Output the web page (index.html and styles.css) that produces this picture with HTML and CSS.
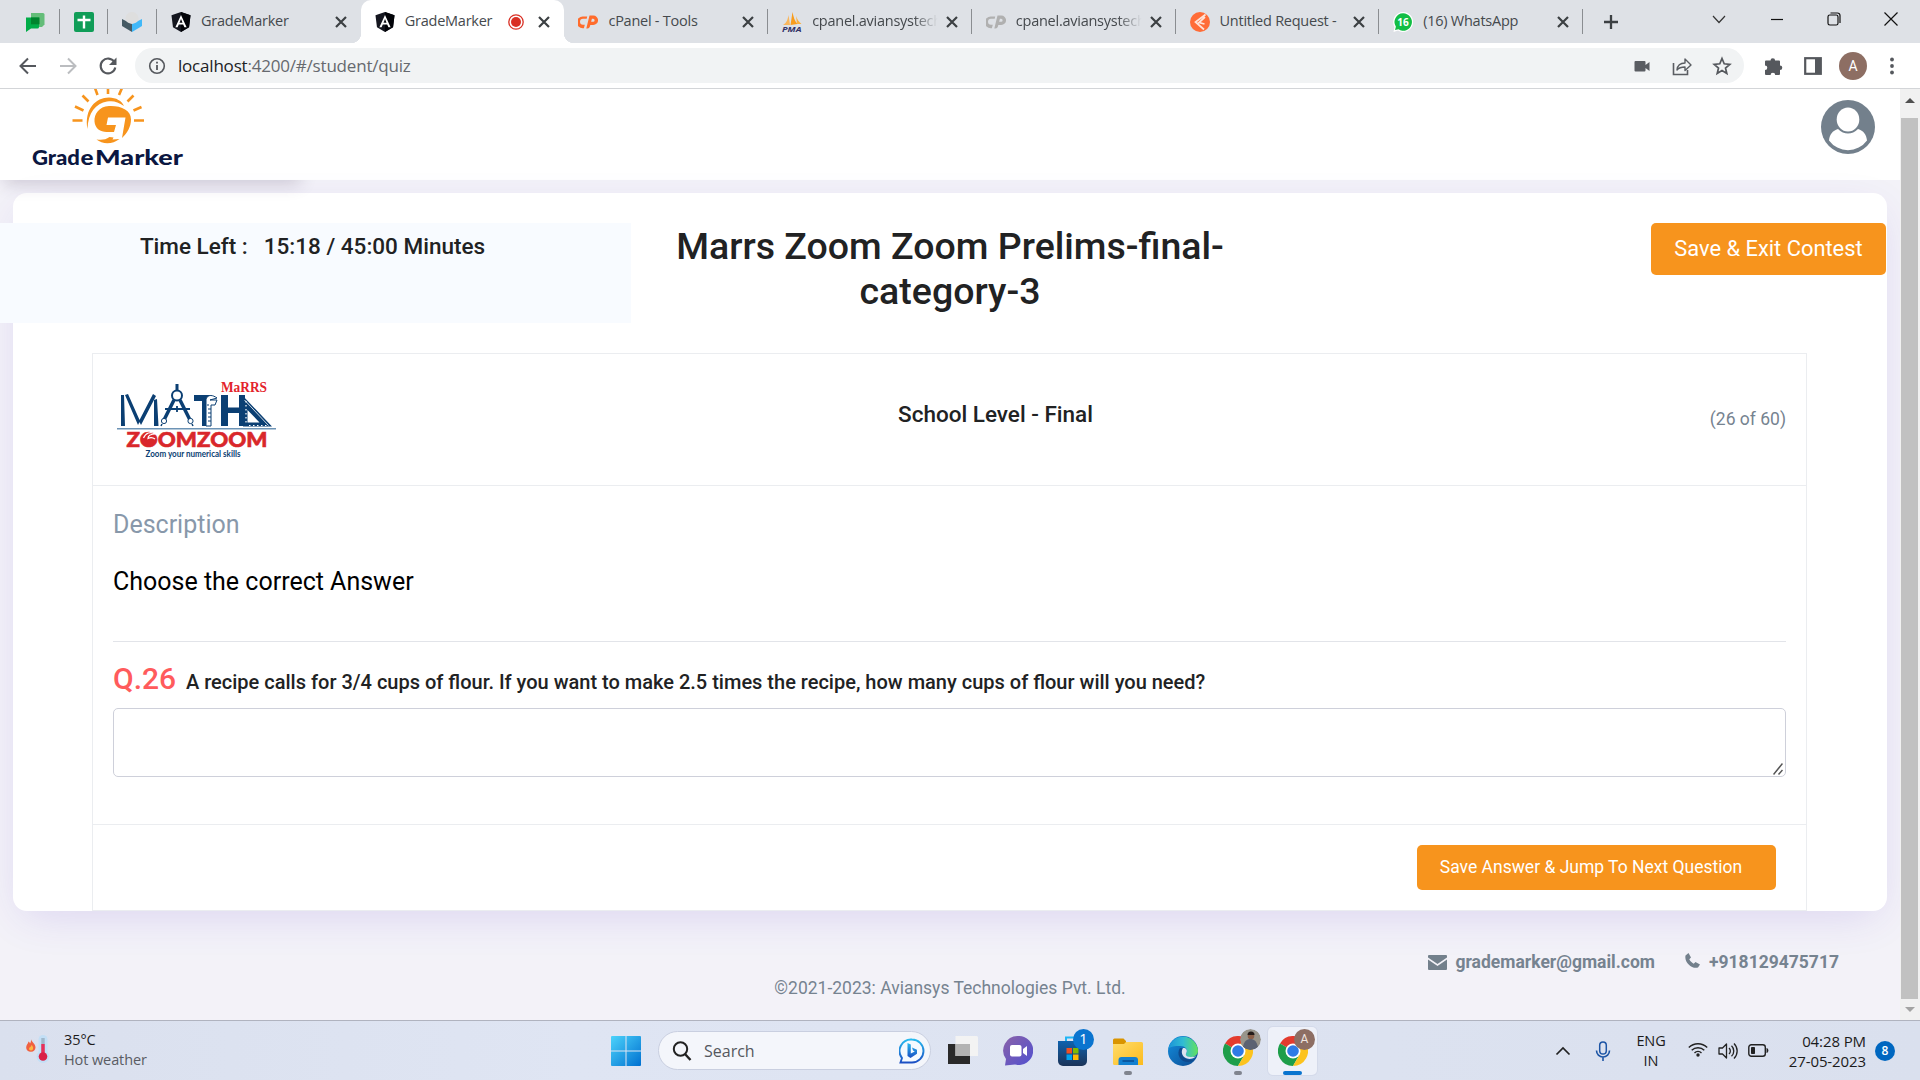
FILE: index.html
```html
<!DOCTYPE html>
<html lang="en">
<head>
<meta charset="utf-8">
<title>GradeMarker</title>
<link rel="stylesheet" href="styles.css">
</head>
<body>
<svg class="defs" width="0" height="0">
  <defs>
    <symbol id="x" viewBox="0 0 14 14"><path d="M2 2l10 10M12 2L2 12" stroke="#3c4043" stroke-width="2.2" fill="none"/></symbol>
    <symbol id="angular" viewBox="0 0 20 20"><path d="M10 0l9.500 3.300-1.500 12L10 20l-8-4.700L.5 3.300z" fill="#14161f"/><path d="M10 0l9.500 3.300-1.500 12L10 20z" fill="#020308"/><path d="M10 3l5.600 12.300h-2.200l-1.200-2.900H7.800l-1.200 2.900H4.400zM10 7l-1.500 3.700h3z" fill="#fff"/></symbol>
    <symbol id="cp" viewBox="0 0 20 14"><path d="M8.700 3.700H5a3 3 0 0 0 0 6h1.800l-.9 3.600H4.700A4.900 4.900 0 0 1 4.700 1.500h4.500z" fill="currentColor"/><path d="M8.300 13.500L11.500.5h3.800a4.700 4.700 0 0 1 0 9.500h-3.200l.9-3.300h2.100a1.500 1.500 0 0 0 0-3h-1.200l-2 7.800a2.600 2.600 0 0 1-2.500 2z" fill="currentColor"/></symbol>
    <symbol id="chrome" viewBox="0 0 30 30"><path d="M15 15L2 7.500A15 15 0 0 1 28 7.500z" fill="#e33b2e"/><path d="M2 7.500A15 15 0 0 0 15 30l6.500-11.200L15 15z" fill="#1e9e4a"/><path d="M28 7.500A15 15 0 0 1 15 30l6.500-11.200L17 7.500z" fill="#fcc31e"/><circle cx="15" cy="15" r="7.500" fill="#fff"/><circle cx="15" cy="15" r="5.800" fill="#2f7be6"/></symbol>
    <linearGradient id="win" x1="0" y1="0" x2="1" y2="1"><stop offset="0" stop-color="#4cd3fb"/><stop offset="1" stop-color="#0070d0"/></linearGradient>
    <linearGradient id="bing" x1="0" y1="0" x2="0" y2="1"><stop offset="0" stop-color="#27b9ee"/><stop offset="1" stop-color="#1b4fc4"/></linearGradient>
    <linearGradient id="chat" x1="0" y1="0" x2="1" y2="1"><stop offset="0" stop-color="#8b62a8"/><stop offset="1" stop-color="#5050d0"/></linearGradient>
    <linearGradient id="store" x1="0" y1="0" x2="0" y2="1"><stop offset="0" stop-color="#0f62ae"/><stop offset="1" stop-color="#1b3358"/></linearGradient>
    <linearGradient id="folder" x1="0" y1="0" x2="1" y2="1"><stop offset="0" stop-color="#ffdc6a"/><stop offset="1" stop-color="#fcbb1d"/></linearGradient>
    <linearGradient id="edgeTop" x1="0" y1="0" x2="1" y2="0"><stop offset="0" stop-color="#1b93d8"/><stop offset=".5" stop-color="#31bcd3"/><stop offset="1" stop-color="#62e25c"/></linearGradient>
    <linearGradient id="edgeLow" x1="0" y1="0" x2="1" y2="1"><stop offset="0" stop-color="#1490df"/><stop offset="1" stop-color="#0c4a92"/></linearGradient>
  </defs>
</svg>

<div class="tabstrip">
  <div class="pin"><svg width="20" height="20" viewBox="0 0 20 20"><path d="M6 1h12a1.500 1.500 0 0 1 1.500 1.500v10L17 15H6z" fill="#64bd79"/><path d="M1 5.500h13V15a1.500 1.500 0 0 1-1.500 1.500H6L1 20z" fill="#00ac47"/><path d="M6 5.500h8.500v6.800H6z" fill="#00832d"/></svg></div>
  <div class="pin"><svg width="20" height="20" viewBox="0 0 20 20"><rect width="20" height="20" rx="2" fill="#109d58"/><path d="M10 3.500v13M3.500 8h13" stroke="#fff" stroke-width="2.400"/></svg></div>
  <div class="pin"><svg width="20" height="20" viewBox="0 0 20 20"><path d="M0 7l10 5v8L0 14z" fill="#455a64"/><path d="M20 7l-10 5v8l10-6z" fill="#40b8f8"/><path d="M10 0c4 0 6.500 3.500 6.500 6.500S13.500 11.500 10 11.500 3.500 9.500 3.500 6.500 6 0 10 0z" fill="#dedede"/></svg></div>
  <div class="tab"><svg class="fav" width="20" height="20"><use href="#angular"/></svg><span class="name">GradeMarker</span><svg class="close" width="14" height="14"><use href="#x"/></svg></div>
  <div class="tab active"><svg class="fav" width="20" height="20"><use href="#angular"/></svg><span class="name">GradeMarker</span><svg class="rec" width="16" height="16" viewBox="0 0 16 16"><circle cx="8" cy="8" r="7.200" fill="none" stroke="#d93025" stroke-width="1.300"/><circle cx="8" cy="8" r="5" fill="#d93025"/></svg><svg class="close" width="14" height="14"><use href="#x"/></svg></div>
  <div class="tab"><svg class="fav orange" width="20" height="14"><use href="#cp"/></svg><span class="name">cPanel - Tools</span><svg class="close" width="14" height="14"><use href="#x"/></svg></div>
  <div class="tab"><svg class="fav" width="20" height="20" viewBox="0 0 20 20"><path d="M1 13c4-2 5-7 5.500-10L8 13z" fill="#f9b65c"/><path d="M8.500 13L10.500 0c1 5 2 9 5 12z" fill="#f89c1c"/><path d="M15 12l-1-8c1 3 3 6 5.500 8z" fill="#fbb040"/><text x="0" y="19.500" font-size="7.500" font-weight="700" font-style="italic" textLength="19.500" lengthAdjust="spacingAndGlyphs" fill="#333366">PMA</text></svg><span class="name fade">cpanel.aviansystech</span><svg class="close" width="14" height="14"><use href="#x"/></svg></div>
  <div class="tab"><svg class="fav grey" width="20" height="14"><use href="#cp"/></svg><span class="name fade">cpanel.aviansystech</span><svg class="close" width="14" height="14"><use href="#x"/></svg></div>
  <div class="tab"><svg class="fav" width="20" height="20" viewBox="0 0 20 20"><circle cx="10" cy="10" r="10" fill="#ff6c37"/><path d="M15.500 2.500L5.500 10l8.500 7.500M15 5l-6 5.500 5.500 1.500" stroke="#ffe3d8" stroke-width="1.700" fill="none"/></svg><span class="name">Untitled Request -</span><svg class="close" width="14" height="14"><use href="#x"/></svg></div>
  <div class="tab"><svg class="fav" width="20" height="20" viewBox="0 0 20 20"><path d="M10 0a10 10 0 1 1-5 18.600L.5 20 1.500 15A10 10 0 0 1 10 0z" fill="#fff"/><path d="M10 1.300a8.700 8.700 0 1 1-4.500 16L2 18l.9-3.300A8.700 8.700 0 0 1 10 1.300z" fill="#12be45"/><text x="10" y="13.700" font-size="10" font-weight="700" text-anchor="middle" fill="#fff">16</text></svg><span class="name">(16) WhatsApp</span><svg class="close" width="14" height="14"><use href="#x"/></svg></div>
  <svg class="plus" width="16" height="16" viewBox="0 0 16 16"><path d="M8 1v14M1 8h14" stroke="#3c4043" stroke-width="2.300"/></svg>
  <div class="winctl">
    <svg width="16" height="14" viewBox="0 0 16 14"><path d="M2 4l6 6.500L14 4" stroke="#333" stroke-width="1.200" fill="none"/></svg>
    <svg width="14" height="14" viewBox="0 0 14 14"><path d="M1 7.500h12" stroke="#111" stroke-width="1.200"/></svg>
    <svg width="14" height="14" viewBox="0 0 14 14"><rect x="1" y="3" width="10" height="10" rx="1.800" fill="none" stroke="#111" stroke-width="1.200"/><path d="M3.500 1h7A2.500 2.500 0 0 1 13 3.500V11" fill="none" stroke="#111" stroke-width="1.200"/></svg>
    <svg width="14" height="14" viewBox="0 0 14 14"><path d="M.5.500l13 13M13.500.5l-13 13" stroke="#111" stroke-width="1.200"/></svg>
  </div>
</div>

<div class="toolbar">
  <svg class="nav" width="20" height="20" viewBox="0 0 20 20"><path d="M18 10H3M10 2.500L2.500 10l7.500 7.500" stroke="#55585d" stroke-width="2" fill="none"/></svg>
  <svg class="nav" width="20" height="20" viewBox="0 0 20 20"><path d="M2 10h15M10 2.500l7.500 7.500-7.500 7.500" stroke="#bbbdc0" stroke-width="2" fill="none"/></svg>
  <svg class="nav" width="20" height="20" viewBox="0 0 20 20"><path d="M16.300 6A7.400 7.400 0 1 0 17.300 11.500" stroke="#55585d" stroke-width="2.100" fill="none"/><path d="M18.500 1.500V9H11z" fill="#55585d"/></svg>
  <div class="omnibox">
    <svg width="18" height="18" viewBox="0 0 18 18"><circle cx="9" cy="9" r="7.300" stroke="#55585d" stroke-width="1.600" fill="none"/><path d="M9 8v5M9 4.700v1.900" stroke="#55585d" stroke-width="1.800"/></svg>
    <span class="url"><b>localhost</b>:4200/#/student/quiz</span>
    <div class="omni-actions">
      <svg width="20" height="20" viewBox="0 0 20 20"><path d="M3.500 5h9a1 1 0 0 1 1 1v3L17.500 6v9l-4-3v2.500a1 1 0 0 1-1 1h-9a1 1 0 0 1-1-1V6a1 1 0 0 1 1-1z" fill="#5a5d62"/></svg>
      <svg width="20" height="20" viewBox="0 0 20 20"><path d="M1.500 7v11.500h14V14" stroke="#5a5d62" stroke-width="1.600" fill="none"/><path d="M5 14c.5-5 3.500-7 8-7V3l6 6-6 5.500V11c-3.500 0-6 .5-8 3z" stroke="#5a5d62" stroke-width="1.400" fill="none" stroke-linejoin="round"/></svg>
      <svg width="20" height="20" viewBox="0 0 20 20"><path d="M10 2.500l2.200 5.300 5.600.5-4.300 3.700 1.300 5.500L10 14.600l-4.800 2.900 1.300-5.500-4.300-3.700 5.600-.5z" stroke="#55585d" stroke-width="1.700" fill="none"/></svg>
    </div>
  </div>
  <svg class="ext" width="20" height="20" viewBox="0 0 20 20"><path d="M3 4.500h4.500a2.300 2.300 0 1 1 4.600 0H16a1 1 0 0 1 1 1v4a2.300 2.300 0 1 1 0 4.600v3.900a1 1 0 0 1-1 1h-3.800a2.300 2.300 0 0 0-4.600 0H3a1 1 0 0 1-1-1v-4a2.300 2.300 0 0 0 0-4.600V5.500a1 1 0 0 1 1-1z" fill="#55585d"/></svg>
  <svg class="side" width="18" height="18" viewBox="0 0 18 18"><rect x="1.200" y="1.200" width="15.600" height="15.600" fill="none" stroke="#55585d" stroke-width="2.200"/><path d="M11 1h6v16h-6z" fill="#55585d"/></svg>
  <div class="profile">A</div>
  <svg width="6" height="18" viewBox="0 0 6 18"><circle cx="3" cy="2.500" r="1.900" fill="#55585d"/><circle cx="3" cy="9" r="1.900" fill="#55585d"/><circle cx="3" cy="15.500" r="1.900" fill="#55585d"/></svg>
</div>

<div class="viewport">
  <div class="page">
    <header class="header">
      <div class="brand">
        <svg width="160" height="82" viewBox="30 89 160 82">
          <g stroke="#f7941d" stroke-width="2.600" fill="none"><path d="M72.500 120.500h10M134 120.500h10M75 106.500l8.500 4M141.500 107l-8 3.500M82.500 95.500l6 6M133.500 95.500l-6 6M95 88l2.500 7M122 88l-3 7M108 87v7"/></g>
          <path d="M87.500 129C84 109 96 97.500 109 97.500c7 0 13 3.500 15 8.500-6-4.500-11-5.500-17-4.500-11 2-19 11-19.500 27.500z" fill="#f7941d"/>
          <path d="M109 106c-10 .5-15 8-14.500 15.500.500 7 6 10.500 12 10.500h7.500l2-7h-9.500l1.500-7.500h17.500L122 138c5.500-5 9-11.500 9-18.500C131 110 121 105.500 109 106z" fill="#f7941d"/>
          <path d="M96.500 139.500c5 .500 9 .5 13-2.500l4 .5-1 2 7-.5c-7 5.500-17 5.500-23 .5z" fill="#f7941d"/>
          <text x="32" y="165.300" font-size="20.500" textLength="48" lengthAdjust="spacingAndGlyphs" class="brand-name">Grad</text>
          <text x="80.500" y="165.300" font-size="20.500" textLength="13" lengthAdjust="spacingAndGlyphs" class="brand-name">e</text>
          <text x="95" y="165.300" font-size="20.500" textLength="88" lengthAdjust="spacingAndGlyphs" class="brand-name">Marker</text>
        </svg>
      </div>
      <svg class="user" width="54" height="54" viewBox="0 0 54 54"><circle cx="27" cy="27" r="27" fill="#73808c"/><ellipse cx="27" cy="19.500" rx="11.300" ry="12" fill="#fff"/><path d="M17 29c-5.500 1.500-8.500 6-9 11.500a23.500 23.500 0 0 0 38 0c-.500-5.500-3.500-10-9-11.500-6 6-14 6-20 0z" fill="#fff"/></svg>
    </header>

    <main class="card">
      <div class="top">
        <div class="timer"><span>Time Left :</span><span>15:18 / 45:00 Minutes</span></div>
        <h1 class="title">Marrs Zoom Zoom Prelims-final-<br>category-3</h1>
        <button class="btn exit">Save &amp; Exit Contest</button>
      </div>
      <section class="quiz">
        <div class="quiz-head">
          <svg width="164" height="84" viewBox="115 378 164 84">
            <g fill="#0b3f73">
              <path d="M121 395h3l1 31h-4zM125 395l3-1 12 27-2 4zM139 421l14-27 3 2-15 29zM154 400l3-1 1.500 27H154z"/>
              <path d="M194 395h17v6h-17zM202 395h7v31h-7zM221 395h7v12.500h11V395h6v31h-6v-13h-11v13h-7z"/>
              <path d="M243 396l29 30.500h-29zm4.500 14v12.500h12z" fill-rule="evenodd"/>
            </g>
            <g stroke="#0b3f73" fill="none"><circle cx="177" cy="395.500" r="5" stroke-width="2"/><path d="M177 384v7" stroke-width="3"/><path d="M174 400l-10 20M180 400l10 20" stroke-width="3.500"/><path d="M165 409h25M177 406v6" stroke-width="1.800"/><circle cx="164" cy="421" r="2.600" fill="#fff"/><circle cx="190.500" cy="421" r="2.600" fill="#fff"/><path d="M162 424l-1 2M192 424l1 2" stroke-width="1.500"/><path d="M206 426v-27c2-5 7-4 11-1l-7 2h7l-2 5h-4v21z" fill="#fff"/><path d="M208 404v2M208 409h3M208 413h3M208 417h3M208 421h3"/></g>
            <path d="M246 401v22.500M249 425.500h20" stroke="#fff" stroke-width="1.200" stroke-dasharray="1.500 2.500" fill="none"/>
            <path d="M244.500 400l24 25.500" stroke="#fff" stroke-width=".8" fill="none"/>
            <path d="M117 428.800h159" stroke="#6d93b5" stroke-width="1.600"/>
            <text x="221" y="392.300" class="l-marrs" textLength="46" lengthAdjust="spacingAndGlyphs">MaRRS</text>
            <text x="126.500" y="446.700" class="l-zoom" textLength="141" lengthAdjust="spacingAndGlyphs">ZOOMZOOM</text>
            <circle cx="149.500" cy="439" r="6.500" fill="#d9272b"/>
            <path d="M143.500 438c2-5 7-7 12-4-5 0-7.500 2-7.500 4.500 2.500-1.500 5-1 7 .5" stroke="#fff" stroke-width="1.200" fill="none"/>
            <text x="145.500" y="457" class="l-tag" textLength="95" lengthAdjust="spacingAndGlyphs">Zoom your numerical skills</text>
          </svg>
          <h2 class="level">School Level - Final</h2>
          <span class="count">(26 of 60)</span>
        </div>
        <div class="quiz-body">
          <p class="label">Description</p>
          <p class="desc">Choose the correct Answer</p>
          <hr class="rule">
          <div class="question"><span class="qno">Q.26</span><span class="qtext">A recipe calls for 3/4 cups of flour. If you want to make 2.5 times the recipe, how many cups of flour will you need?</span></div>
          <div class="answer"><svg width="10" height="12" viewBox="0 0 10 12"><path d="M.5 11.500l9-11M5.500 11.500l4-4.500" stroke="#555" stroke-width="1.500"/></svg></div>
        </div>
        <div class="quiz-foot"><button class="btn next">Save Answer &amp; Jump To Next Question</button></div>
      </section>
    </main>

    <footer class="footer">
      <div class="contacts">
        <svg width="19" height="15" viewBox="0 0 19 15"><path d="M1 0h17a1 1 0 0 1 1 1v1.500L9.500 9 0 2.500V1a1 1 0 0 1 1-1z" fill="#73808c"/><path d="M0 4.500l9.500 6.500L19 4.500V14a1 1 0 0 1-1 1H1a1 1 0 0 1-1-1z" fill="#73808c"/></svg>
        <span class="mail">grademarker@gmail.com</span>
        <svg class="phone" width="15" height="15" viewBox="0 0 15 15"><path d="M.5 2.500L3.500 0 6 4.500 4.300 6.300c1 2 2.400 3.400 4.400 4.400L10.500 9 15 11.500 13 14.500C7 16.500 -1 9 .5 2.500z" fill="#73808c"/></svg>
        <span class="tel">+918129475717</span>
      </div>
      <div class="copy">©2021-2023: Aviansys Technologies Pvt. Ltd.</div>
    </footer>
  </div>
  <div class="scrollbar"><i class="arrow up"></i><div class="thumb"></div><i class="arrow down"></i></div>
</div>

<div class="taskbar">
  <div class="weather">
    <svg width="26" height="30" viewBox="0 0 26 30"><path d="M5 5c0 2.500 4.500 4.500 4.500 8.500a4.700 4.700 0 0 1-9.300.5C0 11 2 10 2.500 7.500c1 .5 1 1 1.500 2C5 8.500 5 6.500 5 5z" fill="#f0603f"/><path d="M5.500 11c2.500 2 2 5.500-.5 5.500s-2.500-3-.500-3.500z" fill="#fdb843"/><rect x="12.500" y="1" width="9" height="22" rx="4.500" fill="#c3dff6"/><circle cx="17" cy="22.500" r="6.500" fill="#c3dff6"/><path d="M15.300 4h3.400v14h-3.400z" fill="#9fb7ca"/><path d="M15.300 10h3.400v10h-3.400z" fill="#e8305a"/><circle cx="17" cy="22.500" r="4.300" fill="#d92148"/></svg>
    <div class="wtext"><span>35°C</span><span class="dim">Hot weather</span></div>
  </div>
  <div class="apps">
    <svg class="start" width="30" height="30" viewBox="0 0 30 30"><path d="M1 0h13.500v14.500H0V1a1 1 0 0 1 1-1zM15.500 0H29a1 1 0 0 1 1 1v13.500H15.500zM0 15.500h14.500V30H1a1 1 0 0 1-1-1zM15.500 15.500H30V29a1 1 0 0 1-1 1H15.500z" fill="url(#win)"/></svg>
    <div class="search">
      <svg width="20" height="20" viewBox="0 0 20 20"><circle cx="8.500" cy="8" r="6.700" stroke="#222" stroke-width="2" fill="none"/><path d="M13 13l5.500 6" stroke="#222" stroke-width="2.400"/></svg>
      <span>Search</span>
      <svg width="26" height="26" viewBox="0 0 26 26"><path d="M13 1.500a11.500 11.500 0 1 1 0 23H1.500L3 20A11.500 11.500 0 0 1 13 1.500z" stroke="url(#bing)" stroke-width="1.900" fill="#f5faff"/><path d="M8.500 5l3.300 1.500V15.500l4-2-1.800-1-1-3 5 2.200v4L11.500 20l-3-2z" fill="url(#bing)"/></svg>
    </div>
    <div class="app"><svg width="30" height="30" viewBox="0 0 30 30"><path d="M0 8h22v20H0z" fill="#2a2a2a"/><path d="M7.500 0h21A1.500 1.500 0 0 1 30 1.500V20H7.500z" fill="#f3f3f3"/><path d="M7.500 8H22v12H7.500z" fill="#b3b3b3"/></svg></div>
    <div class="app"><svg width="30" height="30" viewBox="0 0 30 30"><path d="M15 0a14.500 14.500 0 1 1-3 28.500L2 29.500 3 23A14.500 14.500 0 0 1 15 0z" fill="url(#chat)"/><rect x="7" y="9" width="11.500" height="11.500" rx="2" fill="#fff"/><path d="M20 13l4-3v10l-4-3z" fill="#fff"/></svg></div>
    <div class="app"><svg width="30" height="30" viewBox="0 0 30 30"><path d="M8 6V1.500h10V6" stroke="#1fb5f5" stroke-width="2" fill="none"/><path d="M0 5h29v20a5 5 0 0 1-5 5H5a5 5 0 0 1-5-5z" fill="url(#store)"/><path d="M8.500 12H14v5.500H8.500z" fill="#f25022"/><path d="M15 12h5.500v5.500H15z" fill="#7fba00"/><path d="M8.500 18.500H14V24H8.500z" fill="#00a4ef"/><path d="M15 18.500h5.500V24H15z" fill="#ffb900"/></svg><span class="badge">1</span></div>
    <div class="app"><svg width="30" height="30" viewBox="0 0 30 30"><path d="M0 4a1.500 1.500 0 0 1 1.500-1.500h9L13 5v5H0z" fill="#d99400"/><path d="M0 8h11l2-2h15.500A1.500 1.500 0 0 1 30 7.500V29H1.500A1.500 1.500 0 0 1 0 27.500z" fill="url(#folder)"/><path d="M5.500 29v-5a3 3 0 0 1 3-3H22a3 3 0 0 1 3 3v5z" fill="#1380d0"/><path d="M9.500 25h11.500" stroke="#0a4d92" stroke-width="1.500"/></svg><i class="run"></i></div>
    <div class="app"><svg width="30" height="30" viewBox="0 0 30 30"><circle cx="15" cy="15" r="15" fill="url(#edgeLow)"/><path d="M.3 13A15 15 0 0 1 30 14.500c0 4-3 6.500-7 6.500-3.500 0-6.500-1.200-5-3.500 2.500-4-1-7.500-5.500-7.500C6 9.500 1.500 11 .3 13z" fill="url(#edgeTop)"/><path d="M12 12c-4 6 0 14 8 14 3 0 5.500-1 7-2.500-2 1-12 1.500-12.500-6 0-2 .5-3 1.500-4-1-1.500-2.500-1.500-4-1.500z" fill="#0f4a8d"/><path d="M18 17.500c2.500-4-1-6-3-5.500-2.500 3.500-1 9 4 10.500 3 1 7 0 9.500-2.500-3 1.500-12 1.500-10.500-2.500z" fill="#dce2ef"/></svg></div>
    <div class="app"><svg width="30" height="30"><use href="#chrome"/></svg><svg class="who" width="21" height="21" viewBox="0 0 21 21"><circle cx="10.500" cy="10.500" r="10.500" fill="#98958b"/><circle cx="11" cy="7" r="3.300" fill="#8a5f48"/><path d="M7.500 6a3.500 3.500 0 0 1 7 0z" fill="#241c1a"/><path d="M3 18c1-6 4-8 7.500-8s6 2 7.500 8a10.500 10.500 0 0 1-15 0z" fill="#5b6272"/></svg><i class="run"></i></div>
    <div class="app on"><svg width="30" height="30"><use href="#chrome"/></svg><span class="who letter">A</span><i class="run wide"></i></div>
  </div>
  <div class="tray">
    <svg class="t-up" width="16" height="10" viewBox="0 0 16 10"><path d="M1.500 8.500L8 2l6.500 6.500" stroke="#222" stroke-width="1.700" fill="none"/></svg>
    <svg class="t-mic" width="16" height="20" viewBox="0 0 16 20"><rect x="4.700" y="1" width="6.600" height="12" rx="3.300" stroke="#1d55a5" stroke-width="1.500" fill="none"/><path d="M1.500 9.500a6.500 6.500 0 0 0 13 0M8 16v4" stroke="#1d55a5" stroke-width="1.600" fill="none"/></svg>
    <div class="lang"><span>ENG</span><span>IN</span></div>
    <svg class="t-wifi" width="20" height="16" viewBox="0 0 20 16"><g stroke="#222" stroke-width="1.400" fill="none"><path d="M.8 6.500a13 13 0 0 1 18.400 0M3.700 9.300a9 9 0 0 1 12.600 0M6.500 12a5 5 0 0 1 7 0"/></g><circle cx="10" cy="14" r="1.700" fill="#222"/></svg>
    <svg class="t-vol" width="20" height="18" viewBox="0 0 20 18"><path d="M1 6h3.500L8.500 2v14L4.500 12H1z" stroke="#222" stroke-width="1.300" fill="none" stroke-linejoin="round"/><path d="M11 6a4 4 0 0 1 0 6M13.500 3.700a7.300 7.300 0 0 1 0 10.600M16 1.500a10.500 10.500 0 0 1 0 15" stroke="#222" stroke-width="1.300" fill="none"/></svg>
    <svg class="t-bat" width="21" height="13" viewBox="0 0 21 13"><rect x=".8" y=".8" width="16.500" height="11.400" rx="2.500" stroke="#222" stroke-width="1.400" fill="none"/><rect x="3" y="3" width="4" height="7" rx=".8" fill="#222"/><path d="M18.500 4c2.500.5 2.500 4.500 0 5z" fill="#222"/></svg>
    <div class="clock"><span>04:28 PM</span><span>27-05-2023</span></div>
    <span class="notif">8</span>
  </div>
</div>
</body>
</html>
```
FILE: styles.css
```css
* { box-sizing: border-box; }
body {
  margin: 0;
  width: 1920px;
  height: 1080px;
  overflow: hidden;
  display: flex;
  flex-direction: column;
  font-family: "Open Sans", "Noto Sans", sans-serif;
  background: #fff;
}
.defs { position: absolute; }
svg { display: block; flex: none; }
h1, h2, p { margin: 0; font-weight: 500; }

/* Browser tabs */
.tabstrip {
  height: 43px;
  background: #dee1e6;
  display: flex;
  align-items: center;
  padding-left: 11px;
}
.pin {
  width: 48.700px;
  height: 25px;
  display: flex;
  align-items: center;
  justify-content: center;
  border-right: 1px solid #8a8d91;
}
.tab {
  width: 203.700px;
  height: 25px;
  padding: 0 12px 0 14px;
  display: flex;
  align-items: center;
  border-right: 1px solid #8a8d91;
}
.tab:has(+ .active) { border-right-color: transparent; }
.tab.active {
  height: 43px;
  background: #fff;
  border: 0;
  border-radius: 10px 10px 0 0;
  padding-right: 13px;
  position: relative;
}
.tab.active::before,
.tab.active::after {
  content: "";
  position: absolute;
  bottom: 0;
  width: 10px;
  height: 10px;
}
.tab.active::before { left: -10px; background: radial-gradient(circle at 0 0, transparent 10px, #fff 10.500px); }
.tab.active::after { right: -10px; background: radial-gradient(circle at 100% 0, transparent 10px, #fff 10.500px); }
.name {
  flex: 1;
  margin: 0 6px 2px 10px;
  font-size: 14.500px;
  letter-spacing: -.25px;
  color: #45494d;
  white-space: nowrap;
  overflow: hidden;
}
.fade { -webkit-mask-image: linear-gradient(90deg, #000 80%, transparent 99%); mask-image: linear-gradient(90deg, #000 80%, transparent 99%); }
.orange { color: #ff6c2c; }
.grey { color: #b0b0b0; }
.rec { margin-right: 13px; }
.plus { margin-left: 20px; }
.winctl {
  margin-left: auto;
  margin-bottom: 6px;
  padding-right: 22px;
  display: flex;
  align-items: center;
  gap: 43px;
}

/* Address bar */
.toolbar {
  height: 46px;
  background: #fff;
  border-bottom: 1px solid #d3d5d8;
  display: flex;
  align-items: center;
  padding-left: 18px;
}
.nav { margin-right: 20px; }
.omnibox {
  width: 1609px;
  height: 35px;
  margin-left: -3px;
  border-radius: 18px;
  background: #f1f3f4;
  display: flex;
  align-items: center;
  padding: 0 12px 0 13px;
}
.url { margin-left: 12px; font-size: 17px; letter-spacing: -.2px; color: #66696e; }
.url b { font-weight: 400; color: #202124; }
.omni-actions { margin-left: auto; display: flex; gap: 20px; }
.ext { margin-left: 19px; }
.side { margin-left: 21px; }
.profile {
  width: 28px;
  height: 28px;
  margin: 0 22px 0 17px;
  border-radius: 50%;
  background: #8d6e63;
  color: #fff;
  font: 14px/28px Roboto, sans-serif;
  text-align: center;
}

/* Page */
.viewport { height: 931px; display: flex; font-family: Roboto, sans-serif; }
.page { width: 1900px; background: #f3f2f8; overflow: hidden; }
.header {
  height: 91px;
  background: #fff;
  display: flex;
  justify-content: space-between;
}
.brand {
  width: 304px;
  padding-left: 30px;
  box-shadow: 0 8px 16px -4px rgba(60, 40, 80, .2);
  clip-path: polygon(0 0, 304px 0, 304px 91px, 320px 91px, 320px 130px, 0 130px);
}
.brand-name { font-family: Lato, sans-serif; font-weight: 900; fill: #0b1741; }
.user { margin: 11px 25px 0 0; }
.card {
  height: 718px;
  margin: 13px 13px 0;
  padding-top: 30px;
  background: #fff;
  border-radius: 14px;
  box-shadow: 0 12px 44px -10px rgba(90, 50, 200, .17);
}
.top {
  height: 100px;
  margin: 0 -13px;
  display: grid;
  grid-template-columns: 631px 1fr 631px;
}
.timer {
  background: #f8fbff;
  padding-top: 9px;
  display: flex;
  justify-content: center;
  gap: 16px;
  padding-right: 6px;
  font-size: 22.500px;
  line-height: 28px;
  font-weight: 500;
  color: #212223;
}
.title { text-align: center; font-size: 37.500px; line-height: 45px; padding-top: 1px; color: #212223; }
.btn { border: 0; padding: 0; background: #f7941d; color: #fff; border-radius: 5px; font-family: Roboto, sans-serif; }
.exit { width: 235px; height: 52px; justify-self: end; margin-right: 14px; padding-bottom: 2px; font-size: 21.875px; }
.quiz { margin: 30px 80px 0 79px; border: 1px solid #ebedf0; height: 558px; }
.quiz-head {
  height: 132px;
  border-bottom: 1px solid #ebedf0;
  display: grid;
  grid-template-columns: 184px 1fr 184px;
  align-items: center;
  padding: 0 20px 0 22px;
}
.level { text-align: center; font-size: 22.500px; line-height: 28px; color: #212223; margin: 0 0 11px 90px; }
.count { text-align: right; font-size: 17.500px; color: #768390; margin-bottom: 2px; }
.quiz-body { height: 338px; padding: 24px 20px 0; }
.label, .desc { font-size: 25px; line-height: 30px; font-weight: 400; color: #8898aa; }
.desc { margin-top: 27px; color: #000; }
.rule { margin: 44px 0 20px; border: 0; height: 1px; background: #e2e4e9; }
.question { display: flex; align-items: baseline; height: 36px; line-height: 36px; font-weight: 500; margin-top: -1px; }
.qno { font-size: 30px; color: #ff5b5c; width: 73px; }
.qtext { font-size: 20px; color: #212223; }
.answer {
  height: 69px;
  margin-top: 11px;
  border: 1px solid #ced0da;
  border-radius: 5px;
  display: flex;
  justify-content: flex-end;
  align-items: flex-end;
  padding: 0 2px 1px 0;
}
.quiz-foot { border-top: 1px solid #ebedf0; padding: 20px 30px 0; display: flex; justify-content: flex-end; }
.next { width: 359px; height: 45px; padding: 0 11px 2px 0; font-size: 17.500px; }
.l-marrs { font: 700 15px "Liberation Serif", serif; fill: #e3232b; }
.l-zoom { font: 900 21px Lato, sans-serif; fill: #d9272b; stroke: #d9272b; stroke-width: .6px; }
.l-tag { font: 700 8.500px Lato, sans-serif; fill: #0b3f73; }
.footer { color: #768390; font-size: 17.500px; line-height: 24px; }
.contacts {
  margin-top: 39px;
  padding-right: 61px;
  display: flex;
  justify-content: flex-end;
  align-items: center;
  font-weight: 700;
}
.mail { margin: 0 30px 0 9px; }
.phone { margin-bottom: 3px; }
.tel { margin-left: 9px; }
.copy { text-align: center; margin-top: 2px; }
.scrollbar {
  width: 20px;
  background: #f1f1f1;
  display: flex;
  flex-direction: column;
  align-items: center;
}
.thumb { width: 17px; height: 881px; background: #c1c1c1; margin-right: 1px; }
.arrow { border: 5px solid transparent; }
.up { border-top: 0; border-bottom-color: #505050; margin: 9px 0 15px; }
.down { border-bottom: 0; border-top-color: #a3a3a3; margin-top: 8px; }

/* Taskbar */
.taskbar {
  height: 60px;
  border-top: 1px solid #b0b3bf;
  background: linear-gradient(90deg, #dae0ee, #dfe5f3 30%, #dae0ee);
  display: grid;
  grid-template-columns: 611px 1fr 375px;
  font-size: 14.500px;
}
.weather { display: flex; padding: 13px 0 0 26px; gap: 12px; color: #1b1b1b; }
.wtext, .lang, .clock { display: flex; flex-direction: column; line-height: 20px; letter-spacing: -.1px; }
.wtext { margin-top: -4px; }
.dim { color: #595c63; }
.apps { display: flex; align-items: center; }
.search {
  width: 273px;
  height: 39px;
  margin: 0 13px 0 17px;
  padding: 0 5px 0 13px;
  border: 1px solid #c9cfe0;
  border-radius: 20px;
  background: #f4f6fb;
  display: flex;
  align-items: center;
  color: #55585e;
  font-size: 16px;
}
.search span { flex: 1; margin-left: 12px; }
.app {
  position: relative;
  width: 49px;
  height: 48px;
  margin-right: 6px;
  display: flex;
  align-items: center;
  justify-content: center;
}
.search + .app { margin-left: -6px; }
.on { background: #eef1f9; border-radius: 5px; box-shadow: 0 0 0 1px #d4daea; }
.badge, .who { position: absolute; right: 1px; top: 2px; width: 21px; height: 21px; border-radius: 50%; text-align: center; }
.badge { background: #0a74cf; color: #fff; line-height: 20px; right: 3px; }
.letter { background: #8d6e63; color: #f0e6e0; font: 12px/21px Roboto, sans-serif; right: 2px; }
.run { position: absolute; bottom: 0; left: 21px; width: 8px; height: 4px; border-radius: 2px; background: #80848e; }
.wide { left: 15px; width: 19px; background: #0a74cf; }
.tray { display: flex; align-items: center; padding-left: 10px; color: #1b1b1b; }
.t-mic { margin-left: 24px; }
.lang { margin-left: 25px; width: 30px; align-items: center; }
.t-wifi { margin-left: 22px; margin-bottom: 4px; }
.t-vol { margin-left: 10px; }
.t-bat { margin-left: 10px; }
.clock { margin-left: auto; align-items: flex-end; padding-right: 9px; font-size: 15px; }
.notif { width: 20px; height: 20px; margin-right: 25px; border-radius: 50%; background: #0067c0; color: #fff; font-size: 12px; font-weight: 600; line-height: 20px; text-align: center; }
```
